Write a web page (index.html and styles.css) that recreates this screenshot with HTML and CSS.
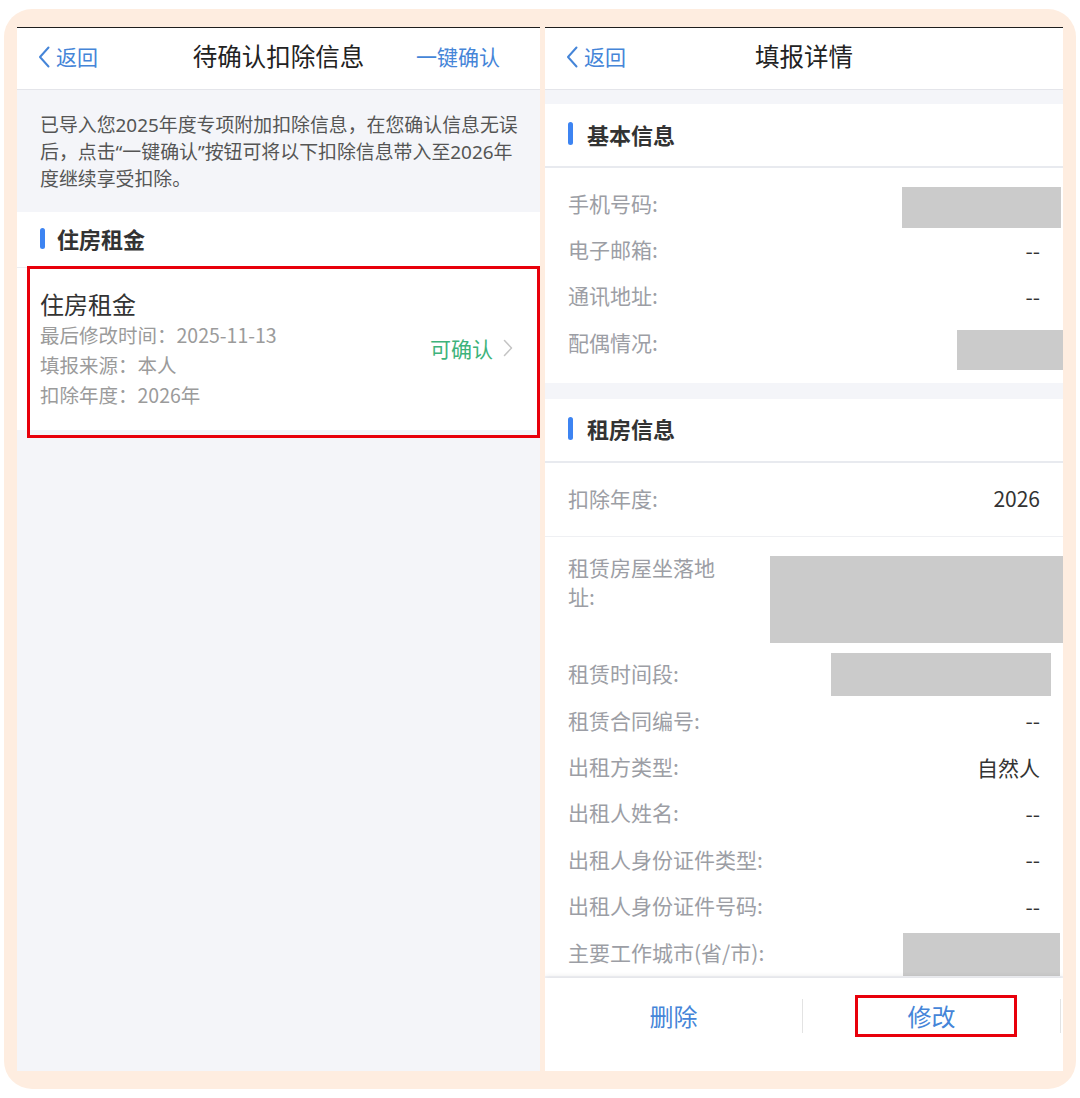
FILE: index.html
```
<!DOCTYPE html>
<html lang="zh-CN">
<head>
<meta charset="utf-8">
<title>待确认扣除信息 / 填报详情</title>
<link rel="stylesheet" href="styles.css">
</head>
<body>
<div class="frame">
  <section class="panel panel-left">
    <header class="nav">
      <span class="back"><svg class="chev" viewBox="0 0 12 22" width="12" height="22"><polyline points="10.5,1.5 2,11 10.5,20.5" fill="none" stroke="currentColor" stroke-width="2" stroke-linecap="round" stroke-linejoin="round"/></svg>返回</span>
      <span class="title">待确认扣除信息</span>
      <span class="action">一键确认</span>
    </header>
    <p class="notice">已导入您2025年度专项附加扣除信息，在您确认信息无误后，点击“一键确认”按钮可将以下扣除信息带入至2026年度继续享受扣除。</p>
    <div class="sec-head sec-head-left"><i class="bar"></i>住房租金</div>
    <div class="card">
      <div class="card-info">
        <div class="card-title">住房租金</div>
        <div class="card-line">最后修改时间：2025-11-13</div>
        <div class="card-line">填报来源：本人</div>
        <div class="card-line">扣除年度：2026年</div>
      </div>
      <div class="card-status">可确认<svg class="arrow" viewBox="0 0 10 18" width="10" height="18"><polyline points="1.5,1.5 8.5,9 1.5,16.5" fill="none" stroke="currentColor" stroke-width="1.5" stroke-linecap="round" stroke-linejoin="round"/></svg></div>
      <div class="mark mark-card"></div>
    </div>
  </section>

  <section class="panel panel-right">
    <header class="nav">
      <span class="back"><svg class="chev" viewBox="0 0 12 22" width="12" height="22"><polyline points="10.5,1.5 2,11 10.5,20.5" fill="none" stroke="currentColor" stroke-width="2" stroke-linecap="round" stroke-linejoin="round"/></svg>返回</span>
      <span class="title">填报详情</span>
      <span class="action"></span>
    </header>
    <div class="detail">
      <div class="group">
        <div class="sec-head sec-head-right"><i class="bar"></i>基本信息</div>
        <div class="rows rows-basic">
          <div class="row"><span class="label">手机号码:</span><span class="value"></span><i class="redact r-phone"></i></div>
          <div class="row"><span class="label">电子邮箱:</span><span class="value">--</span></div>
          <div class="row"><span class="label">通讯地址:</span><span class="value">--</span></div>
          <div class="row"><span class="label">配偶情况:</span><span class="value"></span><i class="redact r-spouse"></i></div>
        </div>
      </div>
      <div class="group">
        <div class="sec-head sec-head-right"><i class="bar"></i>租房信息</div>
        <div class="row row-year"><span class="label">扣除年度:</span><span class="value">2026</span></div>
        <div class="row row-addr"><span class="label label-wrap">租赁房屋坐落地址:</span><span class="value"></span><i class="redact r-addr"></i></div>
        <div class="row"><span class="label">租赁时间段:</span><span class="value"></span><i class="redact r-period"></i></div>
        <div class="row"><span class="label">租赁合同编号:</span><span class="value">--</span></div>
        <div class="row"><span class="label">出租方类型:</span><span class="value">自然人</span></div>
        <div class="row"><span class="label">出租人姓名:</span><span class="value">--</span></div>
        <div class="row"><span class="label">出租人身份证件类型:</span><span class="value">--</span></div>
        <div class="row"><span class="label">出租人身份证件号码:</span><span class="value">--</span></div>
        <div class="row"><span class="label">主要工作城市(省/市):</span><span class="value"></span><i class="redact r-city"></i></div>
      </div>
    </div>
    <footer class="bottom-bar">
      <div class="btn">删除</div>
      <div class="btn">修改<i class="mark mark-btn"></i></div>
    </footer>
  </section>
</div>
</body>
</html>
```
FILE: styles.css
```
* { box-sizing: border-box; }
html, body { margin: 0; padding: 0; background: #ffffff; }
body {
  font-family: "Noto Sans CJK SC", "Noto Sans", sans-serif;
  color: #333333;
}
.frame {
  margin: 9px 4px 0 4px;
  width: 1072px;
  height: 1080px;
  background: #feede0;
  border-radius: 28px;
  padding: 18px 13px;
  display: flex;
  gap: 5px;
}
.panel {
  background: #f4f5f9;
  border-top: 1px solid #1e1e1e;
  display: flex;
  flex-direction: column;
  overflow: hidden;
}
.panel-left { width: 523px; }
.panel-right { width: 518px; }

.nav {
  height: 62px;
  flex: none;
  background: #ffffff;
  border-bottom: 1px solid #e4e5ea;
  display: grid;
  grid-template-columns: 1fr auto 1fr;
  align-items: center;
  padding: 0 21px 4px;
}
.back {
  display: flex;
  align-items: center;
  gap: 6px;
  color: #4585d8;
  font-size: 21px;
  line-height: 1;
}
.chev { display: block; }
.title { font-size: 24.5px; color: #222222; line-height: 1; }
.action {
  justify-self: end;
  margin-right: 19px;
  color: #4585d8;
  font-size: 21px;
  line-height: 1;
}

.notice {
  margin: 0;
  height: 122px;
  padding: 22px 16px 0 23px;
  font-family: "Noto Sans", "Noto Sans CJK SC", sans-serif;
  font-size: 18.9px;
  line-height: 27px;
  color: #555555;
}

.sec-head {
  background: #ffffff;
  display: flex;
  align-items: center;
  font-weight: bold;
  color: #333333;
  font-size: 22px;
  padding-left: 23px;
}
.bar {
  width: 5px;
  border-radius: 3px;
  background: #3d84f2;
  margin-right: 12px;
}
.sec-head-left { height: 56px; border-bottom: 1px solid #eceef2; padding-bottom: 3px; }
.sec-head-left .bar { height: 21px; }
.sec-head-right { height: 64px; border-bottom: 2px solid #e8eaef; padding-bottom: 3px; }
.sec-head-right .bar { height: 23px; margin-right: 14px; }

.card {
  position: relative;
  height: 162px;
  background: #ffffff;
  display: flex;
  align-items: center;
  justify-content: space-between;
  padding: 0 27px 0 23px;
}
.card-title { font-size: 24px; line-height: 32px; color: #333333; }
.card-line { font-size: 19.5px; line-height: 30px; color: #9b9b9b; }
.card-status {
  display: flex;
  align-items: center;
  gap: 10px;
  color: #3db37b;
  font-size: 21px;
  padding-bottom: 2px;
}
.arrow { color: #c4c4c4; display: block; }

.mark {
  position: absolute;
  border: 3px solid #e8000b;
}
.mark-card { left: 10px; top: -2px; width: 513px; height: 172px; }

.detail {
  flex: 1;
  overflow: hidden;
  padding-top: 14px;
  display: flex;
  flex-direction: column;
  gap: 16px;
}
.group { background: #ffffff; }
.rows-basic { padding: 13px 0 16px; }
.row {
  position: relative;
  height: 46.4px;
  display: flex;
  align-items: center;
  justify-content: space-between;
  padding: 0 23px 2px;
}
.label { font-size: 21px; color: #9c9ea5; line-height: 29px; }
.value { font-size: 21px; color: #333333; }
.row-year { height: 74px; border-bottom: 1px solid #eff0f3; }
.row-addr { height: 115px; align-items: flex-start; padding-top: 16px; }
.label-wrap { width: 155px; }

.redact {
  position: absolute;
  background: #cbcbcb;
}
.r-phone { left: 357px; right: 2px; top: 6px; height: 41px; }
.r-spouse { left: 412px; right: 0; top: 10px; height: 40px; }
.r-addr { left: 225px; right: 0; top: 19px; height: 87px; }
.r-period { left: 286px; right: 12px; top: 1px; height: 43px; }
.r-city { left: 358px; right: 3px; top: 3px; height: 43px; }

.bottom-bar {
  flex: none;
  height: 93px;
  background: #ffffff;
  box-shadow: 0 -2px 5px rgba(0, 0, 0, 0.08);
  display: flex;
  align-items: flex-start;
  padding-top: 21px;
  position: relative;
}
.btn {
  position: relative;
  width: 258px;
  height: 34px;
  display: flex;
  align-items: center;
  justify-content: center;
  font-size: 24px;
  color: #4585d8;
  border-right: 1px solid #e3e3e3;
  padding-bottom: 2px;
}
.mark-btn { left: 52px; top: -4px; width: 162px; height: 42px; }
```
